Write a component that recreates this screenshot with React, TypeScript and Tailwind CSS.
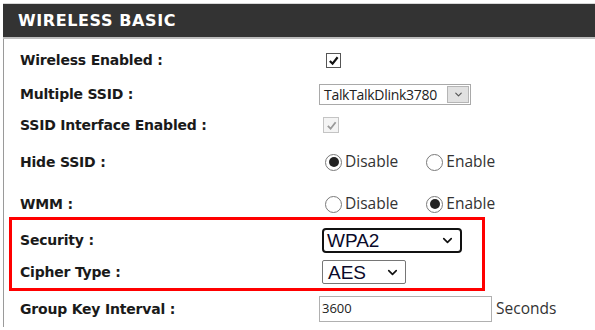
import React from 'react';
import { ChevronDown } from 'lucide-react';

const label = "text-[14px] font-bold text-[#1a1a1a] tracking-[-0.2px] [font-family:'DejaVu_Sans',sans-serif]";
const opt = "text-[15.5px] text-[#333] [font-family:'Open_Sans',sans-serif]";

const Radio: React.FC<{ on?: boolean; text: string }> = ({ on, text }) => (
  <span className="flex items-center">
    <span className="w-[17px] h-[17px] rounded-full border border-[#7a7a7a] bg-white flex items-center justify-center">
      {on && <span className="w-[10px] h-[10px] rounded-full bg-[#222]"></span>}
    </span>
    <span className={`${opt} ml-[3px] leading-none`}>{text}</span>
  </span>
);

const Row: React.FC<{ name: string; h: string; pad?: string; children?: React.ReactNode }> = ({ name, h, pad = 'pl-[16px] w-[318px]', children }) => (
  <div className={`flex items-center ${h}`}>
    <div className={`${pad} ${label}`}>{name}</div>
    <div className="flex items-center">{children}</div>
  </div>
);

const App: React.FC = () => {
  return (
    <div className="w-[595px] h-[330px] bg-white overflow-hidden pt-[3px]">
      <div className="ml-[3px] h-[36px] bg-[#333] border-t border-[#d8d8d8] border-b-2 border-b-[#bdbdbd] flex items-center pl-[15px]">
        <span className="text-white text-[16px] font-bold tracking-[0.6px] [font-family:'DejaVu_Sans',sans-serif]">WIRELESS BASIC</span>
      </div>

      <div className="ml-[3px] border-l border-[#9a9a9a] pt-[3px]">
        <Row name="Wireless Enabled :" h="h-[36px]">
          <span className="ml-[4px] w-[15px] h-[15px] border border-[#555] bg-white flex items-center justify-center">
            <svg width="11" height="11" viewBox="0 0 12 12"><path d="M2 6.5 L5 9.5 L10.5 2.5" stroke="#111" strokeWidth="2.4" fill="none" /></svg>
          </span>
        </Row>
        <Row name="Multiple SSID :" h="h-[32px]">
          <span className="ml-[-3px] w-[152px] h-[21px] border border-[#a9a9a9] bg-white flex items-center justify-between pl-[4px] pr-[1px]">
            <span className="text-[14px] text-[#222] [font-family:'Open_Sans',sans-serif] tracking-[-0.3px]">TalkTalkDlink3780</span>
            <span className="w-[22px] h-[17px] bg-[#e1e1e1] border border-[#b5b5b5] flex items-center justify-center">
              <ChevronDown size={11} strokeWidth={2.5} color="#555" />
            </span>
          </span>
        </Row>
        <Row name="SSID Interface Enabled :" h="h-[30px]">
          <span className="ml-[1px] w-[16px] h-[16px] border border-[#c4c4c4] bg-[#f4f4f4] flex items-center justify-center">
            <svg width="11" height="11" viewBox="0 0 12 12"><path d="M2 6.5 L5 9.5 L10.5 2.5" stroke="#9a9a9a" strokeWidth="2" fill="none" /></svg>
          </span>
        </Row>
        <Row name="Hide SSID :" h="h-[44px]">
          <span className="ml-[3px] flex items-center gap-[28px]">
            <Radio on text="Disable" />
            <Radio text="Enable" />
          </span>
        </Row>
        <div className="pt-[7px]">
          <Row name="WMM :" h="h-[26px]">
            <span className="ml-[3px] flex items-center gap-[28px]">
              <Radio text="Disable" />
              <Radio on text="Enable" />
            </span>
          </Row>
        </div>

        <div className="ml-[5px] w-[476px] border-[3px] border-[#f00] pt-[4px]">
          <Row name="Security :" h="h-[32px]" pad="pl-[8px] w-[310px]">
            <span className="w-[140px] h-[25px] border-2 border-[#111] rounded-[4px] bg-white flex items-center justify-between pl-[3px] pr-[5px]">
              <span className="text-[19px] leading-none text-[#0a0a2a] [font-family:'Liberation_Sans',sans-serif]">WPA2</span>
              <ChevronDown size={15} strokeWidth={2.6} color="#111" />
            </span>
          </Row>
          <Row name="Cipher Type :" h="h-[32px]" pad="pl-[8px] w-[310px]">
            <span className="w-[84px] h-[24px] border border-[#767676] rounded-[2px] bg-white flex items-center justify-between pl-[5px] pr-[5px]">
              <span className="text-[19px] leading-none text-[#0a0a2a] [font-family:'Liberation_Sans',sans-serif]">AES</span>
              <ChevronDown size={15} strokeWidth={2.6} color="#111" />
            </span>
          </Row>
        </div>

        <Row name="Group Key Interval :" h="h-[36px]">
          <span className="ml-[-3px] w-[173px] h-[26px] border border-[#b0b0b0] bg-white flex items-center pl-[2px]">
            <span className="text-[13px] text-[#222] [font-family:'Open_Sans',sans-serif]">3600</span>
          </span>
          <span className={`${opt} ml-[4px]`}>Seconds</span>
        </Row>
      </div>
    </div>
  );
};

export default App;
